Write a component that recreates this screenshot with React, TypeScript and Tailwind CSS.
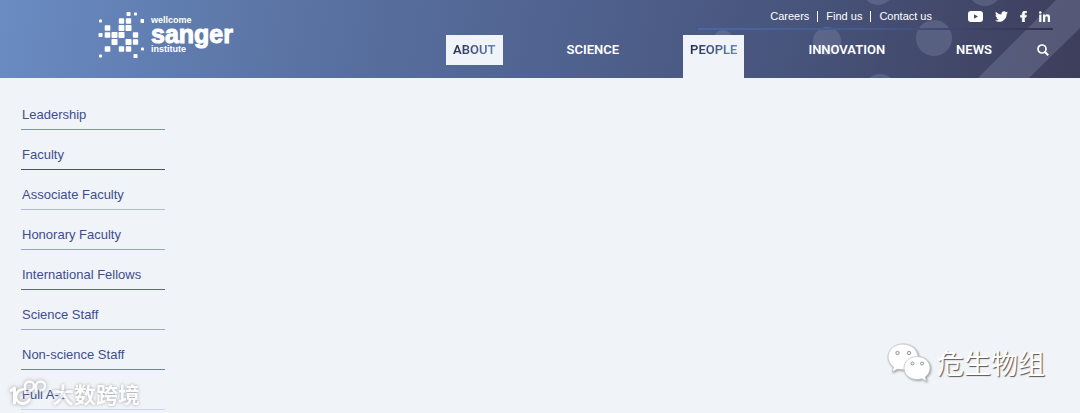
import { FaTwitter, FaFacebookF } from 'react-icons/fa';

const navItems = [
  { label: 'ABOUT', state: 'hover' },
  { label: 'SCIENCE', state: '' },
  { label: 'PEOPLE', state: 'open' },
  { label: 'INNOVATION', state: '' },
  { label: 'NEWS', state: '' },
];

const sideItems = [
  { label: 'Leadership', border: 'border-[#8190c0]' },
  { label: 'Faculty', border: 'border-[#4a4f82]' },
  { label: 'Associate Faculty', border: 'border-[#b0b9d8]' },
  { label: 'Honorary Faculty', border: 'border-[#97a4cc]' },
  { label: 'International Fellows', border: 'border-[#5c6597]' },
  { label: 'Science Staff', border: 'border-[#9ca7d0]' },
  { label: 'Non-science Staff', border: 'border-[#7480ac]' },
  { label: 'Full A-Z', border: 'border-[#c9d4f0]' },
];

// column, row, size
const dots = [
  [4, 0, 4], [5, 0, 3],
  [0, 1, 3], [3, 1, 5.4], [4, 1, 5.4], [6, 1, 4],
  [1, 2, 5.6], [3, 2, 5.8], [4, 2, 6],
  [0, 3, 4], [1, 3, 5.6], [2, 3, 6], [3, 3, 6], [5, 3, 5.4],
  [2, 4, 6], [4, 4, 6], [5, 4, 5.4],
  [1, 5, 5.6], [3, 5, 5.4], [4, 5, 5.4], [6, 5, 3],
  [0, 6, 3], [5, 6, 4],
];

function Logo() {
  return (
    <a href="#" className="flex gap-[7px] text-white">
      <svg width="46" height="48" viewBox="0 0 46 48" fill="currentColor" aria-hidden="true">
        {dots.map(([col, row, size]) => (
          <rect
            key={`${col}-${row}`}
            x={2.5 + col * 7 - size / 2}
            y={3 + row * 7 - size / 2}
            width={size}
            height={size}
            rx="0.8"
          />
        ))}
      </svg>
      <span className="flex flex-col pt-[5px] font-bold">
        <span className="text-[9px] leading-[9px]">wellcome</span>
        <span className="text-[25px] leading-[18px] [-webkit-text-stroke:1px_white]">sanger</span>
        <span className="pt-px text-[9px] leading-[11px]">institute</span>
      </span>
    </a>
  );
}

function HeaderShapes() {
  return (
    <svg
      className="pointer-events-none absolute top-0 right-0"
      width="400"
      height="78"
      viewBox="680 0 400 78"
      fill="#8a94b4"
      fillOpacity="0.3"
      aria-hidden="true"
    >
      <circle cx="723" cy="40" r="10" />
      <circle cx="827" cy="41" r="14" />
      <circle cx="878" cy="-11" r="16" />
      <circle cx="880" cy="90" r="16" />
      <circle cx="934" cy="38" r="18" />
      <circle cx="985" cy="-11" r="17" />
      <path d="M978 78 1056 0H1080V28L1029 78Z" />
    </svg>
  );
}

function Header() {
  return (
    <header className="relative flex h-[78px] overflow-hidden bg-[linear-gradient(100deg,#6a8cc3_0%,#5b75a5_25%,#50628f_52%,#48557d_72%,#3d3e5b_100%)] pl-[98px]">
      <HeaderShapes />
      <div className="relative pt-[11px]">
        <Logo />
      </div>
      <div className="relative ml-auto flex flex-col items-end pr-[27px]">
        <div className="flex h-[30px] w-[355px] items-center justify-end pt-0.5 text-[11px] text-white">
          <ul className="flex items-center divide-x divide-white leading-[11px]">
            <li className="pr-2"><a href="#">Careers</a></li>
            <li className="px-2"><a href="#">Find us</a></li>
            <li className="pl-2"><a href="#">Contact us</a></li>
          </ul>
          <div className="ml-9 flex items-center pr-[3px]">
            <a href="#" aria-label="YouTube">
              <svg width="15" height="11" viewBox="0 0 15 11" aria-hidden="true">
                <rect width="15" height="11" rx="3" fill="#fff" />
                <path d="M6 3.2 10 5.5 6 7.8Z" fill="#454d70" />
              </svg>
            </a>
            <a href="#" aria-label="Twitter" className="ml-3"><FaTwitter size={13} /></a>
            <a href="#" aria-label="Facebook" className="ml-2.5"><FaFacebookF size={11} stroke="#fff" strokeWidth={30} /></a>
            <a href="#" aria-label="LinkedIn" className="ml-2.5">
              <svg width="11" height="11" viewBox="0 0 11 11" fill="#fff" aria-hidden="true">
                <circle cx="1.3" cy="1.5" r="1.3" />
                <path d="M0.200 3.500h2.200V11H0.200ZM4 3.500h2.100v1c.5-.8 1.300-1.200 2.300-1.200 1.900 0 2.600 1.200 2.600 3.200V11H8.800V7c0-1.100-.3-1.800-1.200-1.800-1 0-1.400.7-1.400 1.800v4H4Z" />
              </svg>
            </a>
          </div>
        </div>
        <div className="-mt-0.5 h-0.5 w-[355px] bg-linear-to-r from-[#4a68a5] via-[#46598a] to-[#33324e]" />
        <nav className="mt-[5px] flex h-[43px] items-start pr-1 font-['Roboto',sans-serif] text-[13px] font-semibold text-white">
          <ul className="flex h-full items-start gap-[57px]">
            {navItems.map((item) => (
              <li
                key={item.label}
                className={
                  item.state === 'open'
                    ? 'h-full bg-[#f0f4f8] px-[7px]'
                    : item.state === 'hover'
                      ? 'bg-[#f0f4f8] px-[7px]'
                      : 'px-[7px]'
                }
              >
                <a
                  href="#"
                  className={
                    item.state
                      ? 'block bg-linear-to-r from-[#2b2d4e] to-[#6486c2] bg-clip-text leading-[30px] text-transparent'
                      : 'block leading-[30px]'
                  }
                >
                  {item.label}
                </a>
              </li>
            ))}
          </ul>
          <button type="button" aria-label="Search" className="ml-[38px] flex h-[30px] items-center">
            <svg width="12" height="12" viewBox="0 0 12 12" fill="none" stroke="#fff" aria-hidden="true">
              <circle cx="5" cy="5" r="4" strokeWidth="1.7" />
              <path d="M8 8 11.2 11.2" strokeWidth="2.1" />
            </svg>
          </button>
        </nav>
      </div>
    </header>
  );
}

function WeChatMark() {
  return (
    <div className="absolute right-[35px] bottom-[30px] flex items-center gap-1.5">
      <svg
        className="drop-shadow-[1px_1px_1px_#999]"
        width="44"
        height="40"
        viewBox="0 0 44 40"
        fill="#fff"
        stroke="#b9bcc0"
        strokeWidth="0.7"
        aria-hidden="true"
      >
        <path d="M16 1C7.500 1 1 6.700 1 14c0 4.200 2.200 7.700 5.700 10.100L5 29l5.800-2.900c1.600.5 3.400.7 5.200.7 8.300 0 15-5.700 15-12.800S24.300 1 16 1Z" />
        <path d="M30 13.500c-7.400 0-13 5-13 11.500s5.600 11.500 13 11.500c1.700 0 3.300-.3 4.800-.8l4.700 2.700-1.300-4.400c3-2 4.800-5.200 4.800-9 0-6.500-5.600-11.500-13-11.500Z" />
        <g fill="#eceff2" stroke="#8c8f94" strokeWidth="0.9">
          <circle cx="10.500" cy="10" r="1.700" />
          <circle cx="22" cy="10" r="1.700" />
          <circle cx="25.500" cy="20.500" r="1.500" />
          <circle cx="35" cy="20.500" r="1.500" />
        </g>
      </svg>
      <span className="font-['Noto_Sans_CJK_SC',sans-serif] text-[27px] leading-8 text-white [text-shadow:1px_1px_1px_#555]">
        危生物组
      </span>
    </div>
  );
}

function CornerMark() {
  return (
    <div className="absolute bottom-1.5 left-2 flex items-center gap-1 text-white opacity-80">
      <svg
        className="drop-shadow-[0_0_2px_#888]"
        width="40"
        height="28"
        viewBox="0 0 40 28"
        fill="none"
        stroke="currentColor"
        strokeWidth="3"
        strokeLinecap="round"
        strokeLinejoin="round"
        aria-hidden="true"
      >
        <path d="M3 11.500 6.500 9V24" />
        <path d="M15 10.500A7 7 0 1 0 21 21" />
        <path d="M17 14V7a4.500 4.500 0 1 1 4.500 4.500M28 14V7a4.500 4.500 0 1 1 4.500 4.500" strokeWidth="2.500" />
      </svg>
      <span className="font-['Noto_Sans_CJK_SC',sans-serif] text-[22px] leading-7 font-bold [text-shadow:0_0_3px_#888]">
        大数跨境
      </span>
    </div>
  );
}

export default function App() {
  return (
    <div className="relative min-h-screen bg-[#f0f4f8] font-['Liberation_Sans',Arial,sans-serif]">
      <Header />
      <main className="px-[21px] pt-3">
        <ul className="w-36">
          {sideItems.map((item) => (
            <li key={item.label} className={`border-b pt-[15px] pb-1 pl-px ${item.border}`}>
              <a href="#" className="block text-[13px] leading-5 text-[#3f4d8c]">
                {item.label}
              </a>
            </li>
          ))}
        </ul>
      </main>
      <WeChatMark />
      <CornerMark />
    </div>
  );
}
